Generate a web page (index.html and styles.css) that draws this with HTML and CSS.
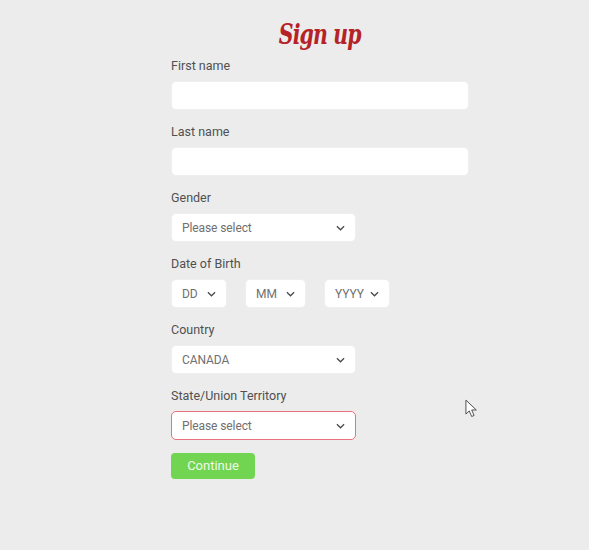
FILE: index.html
```html
<!DOCTYPE html>
<html lang="en">
<head>
    <meta charset="UTF-8">
    <title>Sign up</title>
    <link rel="stylesheet" href="styles.css">
</head>
<body>
<form class="signup">
    <h1 class="title"><span class="title-text">Sign up</span></h1>

    <div class="field">
        <label class="label">First name</label>
        <input class="input" type="text">
    </div>
    <div class="field">
        <label class="label">Last name</label>
        <input class="input" type="text">
    </div>
    <div class="field">
        <label class="label">Gender</label>
        <div class="select wide">
            <span>Please select</span>
            <svg class="chev" viewBox="0 0 10 6"><path d="M1 1l4 4 4-4"/></svg>
        </div>
    </div>
    <div class="field">
        <label class="label">Date of Birth</label>
        <div class="dob">
            <div class="select dd">
                <span>DD</span>
                <svg class="chev" viewBox="0 0 10 6"><path d="M1 1l4 4 4-4"/></svg>
            </div>
            <div class="select mm">
                <span>MM</span>
                <svg class="chev" viewBox="0 0 10 6"><path d="M1 1l4 4 4-4"/></svg>
            </div>
            <div class="select yy">
                <span>YYYY</span>
                <svg class="chev" viewBox="0 0 10 6"><path d="M1 1l4 4 4-4"/></svg>
            </div>
        </div>
    </div>
    <div class="field">
        <label class="label">Country</label>
        <div class="select wide">
            <span>CANADA</span>
            <svg class="chev" viewBox="0 0 10 6"><path d="M1 1l4 4 4-4"/></svg>
        </div>
    </div>
    <div class="field">
        <label class="label">State/Union Territory</label>
        <div class="select wide error">
            <span>Please select</span>
            <svg class="chev" viewBox="0 0 10 6"><path d="M1 1l4 4 4-4"/></svg>
        </div>
    </div>
    <button class="continue" type="button">Continue</button>
</form>

<svg class="cursor" viewBox="0 0 14 20">
    <path d="M1 1v15l3.6-3.4 2.6 6 2.6-1.1-2.6-5.9h5z"/>
</svg>
</body>
</html>
```

FILE: styles.css
```css
* {
    margin: 0;
    padding: 0;
    box-sizing: border-box;
}

body {
    height: 550px;
    overflow: hidden;
    background: #ececec;
    font-family: "Roboto", "Noto Sans", sans-serif;
    font-size: 12.5px;
    color: #505050;
}

.signup {
    width: 298px;
    margin-left: 171px;
    padding-top: 17px;
}

.title {
    height: 32px;
    margin-bottom: 8px;
    padding-top: 2px;
    text-align: center;
    font: italic bold 27px/32px "DejaVu Serif Condensed", "DejaVu Serif", serif;
    letter-spacing: -1px;
    color: #b52227;
}

.title-text {
    display: inline-block;
    transform: scaleX(.84);
}

.field {
    margin-bottom: 13px;
}

.label {
    display: block;
    height: 18px;
    margin-bottom: 6px;
    line-height: 18px;
}

.input {
    display: block;
    width: 100%;
    height: 29px;
    border: 1px solid #efefef;
    border-radius: 5px;
    background: #fff;
}

.select {
    display: flex;
    align-items: center;
    justify-content: space-between;
    height: 29px;
    padding: 0 10px;
    border: 1px solid #efefef;
    border-radius: 5px;
    background: #fff;
    font-size: 12px;
    letter-spacing: -.1px;
    color: #707070;
}

.wide {
    width: 185px;
}

.error {
    border-color: #e8707f;
}

.chev {
    width: 9px;
    height: 6px;
    fill: none;
    stroke: #4a4a4a;
    stroke-width: 1.4;
}

.dob {
    display: flex;
}

.dd {
    width: 56px;
    margin-right: 18px;
}

.mm {
    width: 61px;
    margin-right: 18px;
}

.yy {
    width: 66px;
}

.continue {
    display: block;
    width: 84px;
    height: 26px;
    padding-bottom: 1px;
    border: 0;
    border-radius: 4px;
    background: #72d552;
    color: #eff9e6;
    font: 13px "Roboto", "Noto Sans", sans-serif;
}

.cursor {
    position: absolute;
    left: 465px;
    top: 399px;
    width: 13px;
    height: 19px;
    fill: #fff;
    stroke: #444;
    stroke-width: 1;
}
```
